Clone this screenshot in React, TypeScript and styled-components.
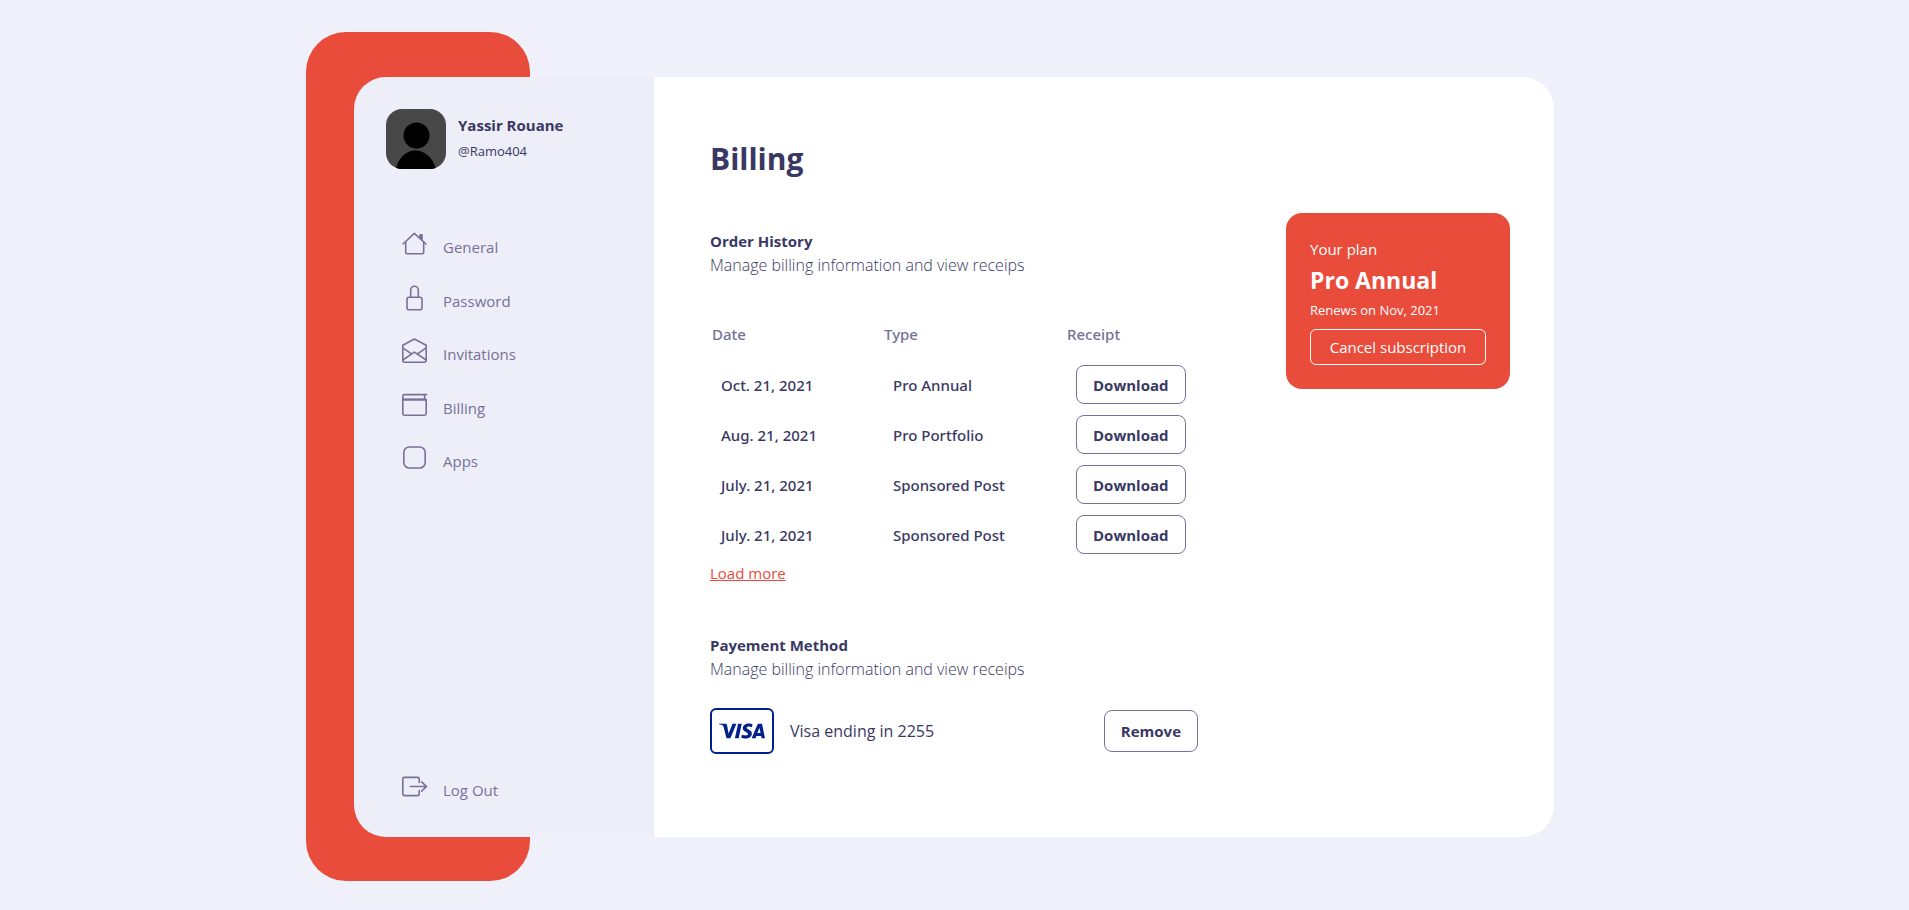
import React from "react";
import styled, { createGlobalStyle } from "styled-components";
import { RiVisaLine } from "react-icons/ri";

const color = {
  page: "#f0f0fb",
  side: "#eeeef8",
  accent: "#e94c3b",
  ink: "#393863",
  muted: "#757299",
  visa: "#00218a",
};

const GlobalStyle = createGlobalStyle`
  *, *::before, *::after { box-sizing: border-box; }
  body {
    margin: 0;
    background: ${color.page};
    color: ${color.ink};
    font-family: "Open Sans", "Noto Sans", sans-serif;
    font-size: 15px;
    line-height: 24px;
  }
  h1, h2, p, ul { margin: 0; padding: 0; }
  button { font-family: inherit; cursor: pointer; }
`;

const Page = styled.div`
  display: flex;
  justify-content: center;
  min-height: 100vh;
  padding: 77px 49px 73px 48px;
`;

const Panel = styled.div`
  position: relative;
  z-index: 0;
  display: flex;
  width: 100%;
  max-width: 1200px;
  border-radius: 32px;

  &::before {
    content: "";
    position: absolute;
    z-index: -2;
    inset: -45px auto -44px -48px;
    width: 224px;
    border-radius: 40px;
    background: ${color.accent};
  }

  &::after {
    content: "";
    position: absolute;
    z-index: -1;
    inset: 0 0 0 32px;
    border-radius: 32px;
    background: #fff;
  }
`;

const Sidebar = styled.aside`
  display: flex;
  flex-direction: column;
  flex: 0 0 300px;
  padding: 32px 32px 37px;
  border-radius: 32px 0 0 32px;
  background: ${color.side};
`;

const Profile = styled.div`
  display: flex;
  align-items: center;
  gap: 12px;
  margin-bottom: 62px;
`;

const Avatar = styled.svg`
  display: block;
  width: 60px;
  height: 60px;
  border-radius: 16px;
`;

const Name = styled.p`
  font-weight: 700;
`;

const Handle = styled.p`
  font-size: 13px;
  line-height: 28px;
`;

const NavList = styled.ul`
  display: flex;
  flex-direction: column;
  justify-content: space-between;
  height: 240px;
  list-style: none;
`;

const NavLink = styled.a`
  display: flex;
  align-items: flex-start;
  gap: 15px;
  height: 26px;
  padding-left: 16px;
  color: ${color.muted};
  line-height: 32px;
  text-decoration: none;
`;

const NavIcon = styled.svg`
  flex: none;
  width: 26px;
  height: 26px;
  fill: none;
  stroke: currentColor;
  stroke-width: 1.6;
  stroke-linejoin: round;
  stroke-linecap: round;
`;

const Footer = styled.div`
  margin-top: auto;
`;

const Main = styled.main`
  flex: 1;
  min-width: 0;
  padding: 62px 44px 40px 56px;
`;

const Title = styled.h1`
  margin-bottom: 34px;
  font-size: 30px;
  line-height: 40px;
  font-weight: 700;
`;

const Columns = styled.div`
  display: flex;
  justify-content: space-between;
  align-items: flex-start;
  gap: 32px;
`;

const Details = styled.div`
  flex: 0 1 488px;
  padding-top: 16px;
`;

const Section = styled.section`
  & + & { margin-top: 48px; }
`;

const Heading = styled.h2`
  font-size: 15px;
  font-weight: 700;
`;

const Lead = styled.p`
  font-size: 16px;
  font-weight: 300;
`;

const Orders = styled.table`
  width: 100%;
  margin-top: 45px;
  border-collapse: collapse;
  table-layout: fixed;
  font-family: "Noto Sans", "Open Sans", sans-serif;
`;

const Th = styled.th<{ $width?: number }>`
  width: ${(p) => (p.$width ? `${p.$width}px` : "auto")};
  padding: 0 0 8px 2px;
  color: ${color.muted};
  font-weight: 500;
  text-align: left;
`;

const Td = styled.td`
  height: 50px;
  padding: 11px 0 0 11px;
  font-weight: 500;
`;

const OutlineButton = styled.button<{ $tall?: boolean }>`
  display: block;
  height: ${(p) => (p.$tall ? 42 : 39)}px;
  padding: 0 16px;
  border: 1px solid ${color.muted};
  border-radius: 8px;
  background: #fff;
  color: ${color.ink};
  font-family: "Open Sans", "Noto Sans", sans-serif;
  font-size: 15px;
  font-weight: 700;
`;

const MoreLink = styled.a`
  display: block;
  width: fit-content;
  margin-top: 7px;
  color: ${color.accent};
`;

const Method = styled.div`
  display: flex;
  align-items: center;
  margin-top: 27px;
  font-size: 16px;

  button { margin-left: auto; }
`;

const CardBadge = styled.span`
  display: flex;
  align-items: center;
  justify-content: center;
  width: 64px;
  height: 46px;
  margin-right: 16px;
  border: 2px solid ${color.visa};
  border-radius: 6px;
  color: ${color.visa};
`;

const Plan = styled.aside`
  flex: 0 0 224px;
  padding: 24px;
  border-radius: 16px;
  background: ${color.accent};
  color: #fff;
`;

const PlanName = styled.p`
  margin: 4px 0;
  font-size: 23px;
  line-height: 30px;
  font-weight: 700;
`;

const PlanNote = styled.p`
  margin-bottom: 8px;
  font-size: 13px;
  line-height: 22px;
`;

const CancelButton = styled.button`
  display: block;
  width: 100%;
  height: 36px;
  padding: 0;
  border: 1px solid #fff;
  border-radius: 6px;
  background: transparent;
  color: #fff;
  font-size: 15px;
`;

const nav = [
  {
    label: "General",
    icon: (
      <>
        <path d="M1 13 12.3 2.3 24 13" />
        <path d="M3.7 11v10.2a1.5 1.5 0 0 0 1.5 1.5h15a1.5 1.5 0 0 0 1.5-1.5V11" />
        <path d="M18 3.8h2v4.8l-2-1.8z" fill="currentColor" />
      </>
    ),
  },
  {
    label: "Password",
    icon: (
      <>
        <rect x="5" y="12.3" width="15" height="12.4" rx="2" />
        <path d="M8.7 12.3V5a3.8 3.8 0 0 1 7.6 0v7.3" />
      </>
    ),
  },
  {
    label: "Invitations",
    icon: (
      <>
        <path d="M.8 7.2 12.4 1l11.8 6.2v15.4a1.6 1.6 0 0 1-1.6 1.6H2.4A1.6 1.6 0 0 1 .8 22.6z" />
        <path d="M.8 9.8 9.5 15.8M24.2 9.8 15.5 15.8M.8 22l11.6-7.8L24.2 22" />
      </>
    ),
  },
  {
    label: "Billing",
    icon: (
      <>
        <path d="M24.6 2.6H2.4A1.6 1.6 0 0 0 .8 4.2v17.4a1.6 1.6 0 0 0 1.6 1.6h20.2a1.6 1.6 0 0 0 1.6-1.6V7.6H2" />
        <path d="M22.6 2.8v4.6" />
        <path d="M1.5 7.6h22" strokeWidth="2" />
      </>
    ),
  },
  {
    label: "Apps",
    icon: <rect x="1.8" y="2" width="21.4" height="21" rx="5.5" />,
  },
];

const orders = [
  { date: "Oct. 21, 2021", type: "Pro Annual" },
  { date: "Aug. 21, 2021", type: "Pro Portfolio" },
  { date: "July. 21, 2021", type: "Sponsored Post" },
  { date: "July. 21, 2021", type: "Sponsored Post" },
];

export default function App() {
  return (
    <>
      <GlobalStyle />
      <Page>
        <Panel>
          <Sidebar>
            <Profile>
              <Avatar viewBox="0 0 60 60" aria-hidden="true">
                <rect width="60" height="60" fill="#484848" />
                <circle cx="30.5" cy="26.5" r="13" />
                <path d="M9.5 60C13 48 20.5 41.5 29.5 41.500S46.5 48 50 60z" />
              </Avatar>
              <div>
                <Name>Yassir Rouane</Name>
                <Handle>@Ramo404</Handle>
              </div>
            </Profile>
            <nav aria-label="Settings">
              <NavList>
                {nav.map((item) => (
                  <li key={item.label}>
                    <NavLink href="#">
                      <NavIcon viewBox="0 0 26 26" aria-hidden="true">
                        {item.icon}
                      </NavIcon>
                      {item.label}
                    </NavLink>
                  </li>
                ))}
              </NavList>
            </nav>
            <Footer>
              <NavLink href="#">
                <NavIcon viewBox="0 0 26 26" aria-hidden="true">
                  <path d="M17.2 8.5V4.9a1.5 1.5 0 0 0-1.5-1.5H2.3A1.5 1.5 0 0 0 .8 4.9v15.2a1.5 1.5 0 0 0 1.5 1.5h13.4a1.5 1.5 0 0 0 1.5-1.5v-3.6" />
                  <path d="M8.4 12.5h16M19.6 7.8l5 4.7-5 4.7" />
                </NavIcon>
                Log Out
              </NavLink>
            </Footer>
          </Sidebar>
          <Main>
            <Title>Billing</Title>
            <Columns>
              <Details>
                <Section>
                  <Heading>Order History</Heading>
                  <Lead>Manage billing information and view receips</Lead>
                  <Orders>
                    <thead>
                      <tr>
                        <Th $width={172}>Date</Th>
                        <Th $width={183}>Type</Th>
                        <Th>Receipt</Th>
                      </tr>
                    </thead>
                    <tbody>
                      {orders.map((order, i) => (
                        <tr key={i}>
                          <Td>{order.date}</Td>
                          <Td>{order.type}</Td>
                          <Td>
                            <OutlineButton type="button">Download</OutlineButton>
                          </Td>
                        </tr>
                      ))}
                    </tbody>
                  </Orders>
                  <MoreLink href="#">Load more</MoreLink>
                </Section>
                <Section>
                  <Heading>Payement Method</Heading>
                  <Lead>Manage billing information and view receips</Lead>
                  <Method>
                    <CardBadge>
                      <RiVisaLine size={46} aria-label="Visa" />
                    </CardBadge>
                    Visa ending in 2255
                    <OutlineButton type="button" $tall>
                      Remove
                    </OutlineButton>
                  </Method>
                </Section>
              </Details>
              <Plan>
                <p>Your plan</p>
                <PlanName>Pro Annual</PlanName>
                <PlanNote>Renews on Nov, 2021</PlanNote>
                <CancelButton type="button">Cancel subscription</CancelButton>
              </Plan>
            </Columns>
          </Main>
        </Panel>
      </Page>
    </>
  );
}
